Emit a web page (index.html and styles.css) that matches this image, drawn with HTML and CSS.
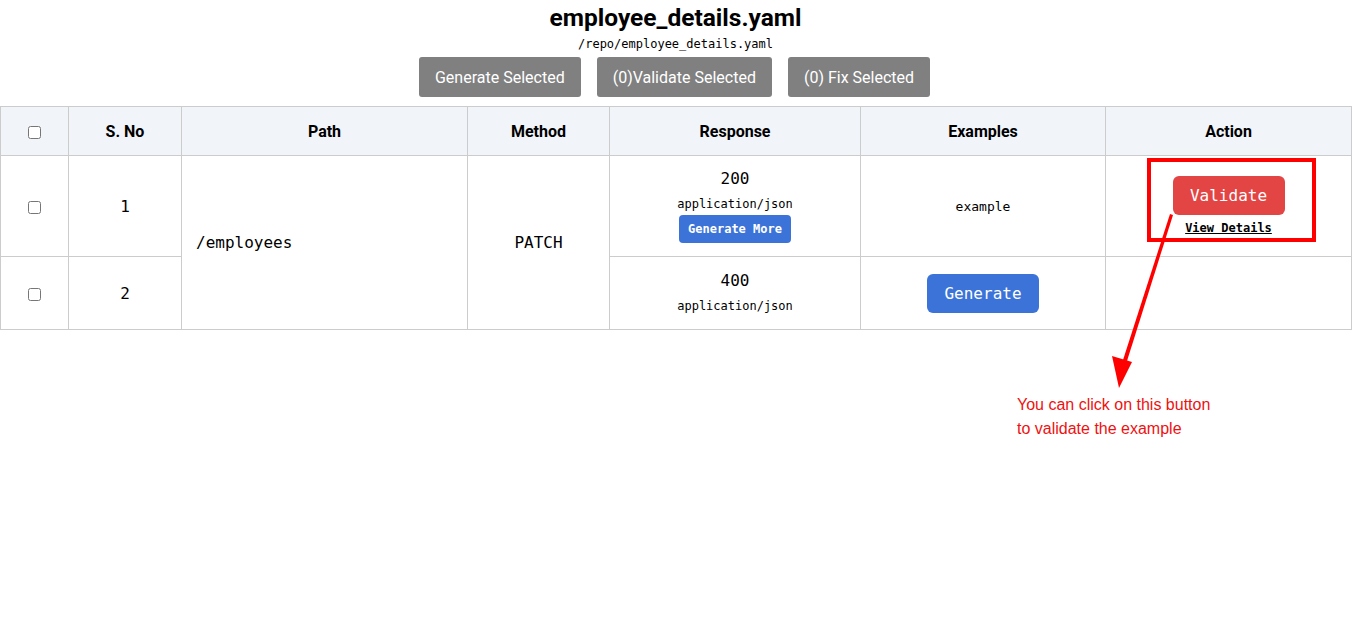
FILE: index.html
```html
<!DOCTYPE html>
<html>
<head>
<meta charset="utf-8">
<link rel="stylesheet" href="styles.css">
</head>
<body>
<div class="page">
  <header class="top">
    <h1 class="title">employee_details.yaml</h1>
    <div class="subtitle">/repo/employee_details.yaml</div>
    <div class="toolbar">
      <button class="tool-btn">Generate Selected</button>
      <button class="tool-btn">(0)Validate Selected</button>
      <button class="tool-btn">(0) Fix Selected</button>
    </div>
  </header>
  <table class="grid">
    <colgroup>
      <col class="c-check">
      <col class="c-sno">
      <col class="c-path">
      <col class="c-method">
      <col class="c-resp">
      <col class="c-ex">
      <col class="c-action">
    </colgroup>
    <thead>
      <tr>
        <th><input type="checkbox"></th>
        <th>S. No</th>
        <th>Path</th>
        <th>Method</th>
        <th>Response</th>
        <th>Examples</th>
        <th>Action</th>
      </tr>
    </thead>
    <tbody>
      <tr class="row1">
        <td><input type="checkbox"></td>
        <td class="mono">1</td>
        <td class="mono path" rowspan="2">/employees</td>
        <td class="mono" rowspan="2">PATCH</td>
        <td>
          <div class="status">200</div>
          <div class="ctype">application/json</div>
          <button class="more-btn">Generate More</button>
        </td>
        <td class="example">example</td>
        <td>
          <button class="validate-btn">Validate</button>
          <div class="details">View Details</div>
        </td>
      </tr>
      <tr class="row2">
        <td><input type="checkbox"></td>
        <td class="mono">2</td>
        <td>
          <div class="status">400</div>
          <div class="ctype">application/json</div>
        </td>
        <td><button class="gen-btn">Generate</button></td>
        <td></td>
      </tr>
    </tbody>
  </table>
</div>
<div class="highlight"></div>
<svg class="arrow" width="1366" height="633" viewBox="0 0 1366 633">
  <polygon points="1170,214 1173,215 1127,361 1123,360" fill="#ff0000"/>
  <polygon points="1112,356 1132,362 1119,388" fill="#ff0000"/>
</svg>
<div class="note">You can click on this button<br>to validate the example</div>
</body>
</html>
```

FILE: styles.css
```css
html, body {
  margin: 0;
  padding: 0;
  background: #ffffff;
}
body {
  font-family: Roboto, "Liberation Sans", sans-serif;
  color: #000;
  position: relative;
  width: 1366px;
  height: 633px;
  overflow: hidden;
}
.top {
  display: flex;
  flex-direction: column;
  align-items: center;
  width: 1351px;
}
.title {
  margin: 5px 0 0;
  font-size: 24.5px;
  line-height: 26px;
  font-weight: 700;
}
.subtitle {
  margin-top: 6px;
  font-family: "DejaVu Sans Mono", "Liberation Mono", monospace;
  font-size: 12px;
  line-height: 15px;
}
.toolbar {
  display: flex;
  gap: 16px;
  margin-top: 5px;
  margin-left: -2px;
}
.tool-btn {
  height: 40px;
  padding: 0 16px;
  background: #808080;
  color: #fff;
  border: none;
  border-radius: 3px;
  font-family: Roboto, "Liberation Sans", sans-serif;
  font-size: 16px;
}
.grid {
  margin-top: 9px;
  width: 1351px;
  border-collapse: collapse;
  table-layout: fixed;
}
.c-check { width: 68px; }
.c-sno { width: 113px; }
.c-path { width: 286px; }
.c-method { width: 142px; }
.c-resp { width: 251px; }
.c-ex { width: 245px; }
.c-action { width: 246px; }
.grid th, .grid td {
  border: 1px solid #cccccc;
  text-align: center;
  vertical-align: middle;
  padding: 0;
}
.grid th {
  background: #f1f4f9;
  height: 48px;
  font-size: 16px;
  font-weight: 700;
}
.grid input[type="checkbox"] {
  margin: 0;
  width: 13px;
  height: 13px;
  vertical-align: middle;
}
.row1 td { height: 100px; }
.row2 td { height: 72px; }
.mono, .status, .example, .ctype, .more-btn, .validate-btn, .gen-btn, .details {
  font-family: "DejaVu Sans Mono", "Liberation Mono", monospace;
}
.mono {
  font-size: 16px;
}
.path {
  text-align: left !important;
  padding-left: 14px !important;
}
.status {
  font-size: 16px;
  line-height: 20px;
}
.ctype {
  font-size: 12px;
  line-height: 18px;
  margin-top: 6px;
}
.more-btn {
  margin-top: 2px;
  height: 28px;
  width: 112px;
  border: none;
  border-radius: 4px;
  background: #3b73d8;
  color: #fff;
  font-size: 12px;
  font-weight: 700;
  padding: 0;
}
.example {
  font-size: 13px;
}
.validate-btn, .gen-btn {
  width: 112px;
  height: 39px;
  border: none;
  border-radius: 6px;
  color: #fff;
  font-size: 16px;
  padding: 0;
}
.validate-btn {
  background: #e34444;
  margin-top: 0;
}
.gen-btn {
  background: #3b73d8;
}
.details {
  font-size: 12px;
  font-weight: 700;
  text-decoration: underline;
  line-height: 16px;
  margin-top: 5px;
}
.highlight {
  position: absolute;
  left: 1147px;
  top: 158px;
  width: 161px;
  height: 76px;
  border: 4px solid #ff0000;
}
.arrow {
  position: absolute;
  left: 0;
  top: 0;
  pointer-events: none;
}
.note {
  position: absolute;
  left: 1017px;
  top: 393px;
  color: #ee1111;
  font-family: "Liberation Sans", Arial, sans-serif;
  font-size: 16px;
  line-height: 24px;
}
```
